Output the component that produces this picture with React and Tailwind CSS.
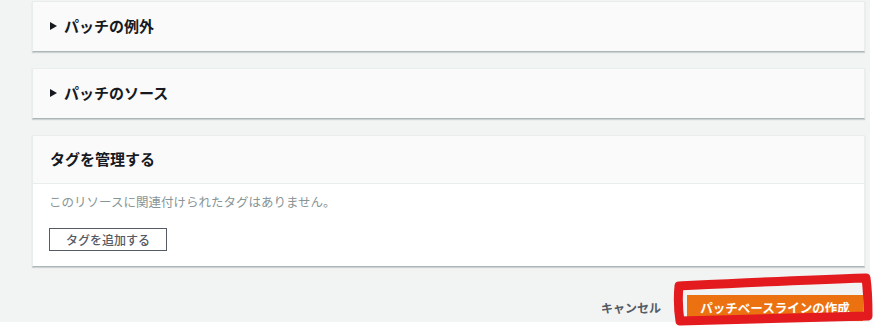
import React from 'react';

const font = { fontFamily: '"Noto Sans CJK JP", "Noto Sans", sans-serif' };

const Caret = () => (
  <svg width="7" height="8" viewBox="0 0 7 8" className="shrink-0">
    <path d="M0 0 L7 4 L0 8 Z" fill="#16191f" />
  </svg>
);

const CollapsedPanel = ({ title }) => (
  <div className="h-[51px] bg-[#fafafa] border-x border-t border-[#eaeded] border-b border-b-[#aab7b8] shadow-[0_1px_1px_0_rgba(0,28,36,0.15)] flex items-center pl-[17px] pb-[2px] gap-[7px]">
    <Caret />
    <span className="text-[15px] font-bold text-[#16191f] leading-none">{title}</span>
  </div>
);

const App = () => {
  return (
    <div className="w-[874px] h-[328px] bg-white relative overflow-hidden" style={font}>
      <div className="w-[870px] h-[322px] bg-[#f2f3f3] pl-[32px] pr-[5px] pt-px flex flex-col">
        <div className="flex flex-col gap-4">
          <CollapsedPanel title="パッチの例外" />
          <CollapsedPanel title="パッチのソース" />

          <div className="bg-white border-x border-t border-[#eaeded] border-b border-b-[#aab7b8] shadow-[0_1px_1px_0_rgba(0,28,36,0.15)]">
            <div className="h-[48px] bg-[#fafafa] border-b border-[#eaeded] flex items-center pl-[17px] pb-[2px]">
              <span className="text-[15px] font-bold text-[#16191f] leading-none">タグを管理する</span>
            </div>
            <div className="h-[82px] pl-[16px] pt-[10px]">
              <p className="text-[12.5px] leading-4 text-[#879596]">このリソースに関連付けられたタグはありません。</p>
              <button className="mt-[18px] w-[118px] h-[23px] border border-[#545b64] bg-white text-[12px] font-medium text-[#545b64] flex items-center justify-center leading-none">
                タグを追加する
              </button>
            </div>
          </div>
        </div>

        <div className="mt-[28px] flex justify-end items-center gap-[26px] pr-[2px]">
          <span className="text-[12px] font-bold text-[#545b64] leading-none">キャンセル</span>
          <button className="w-[176px] h-[26px] bg-[#ec7211] text-white text-[12.5px] font-bold flex items-center justify-center leading-none">
            パッチベースラインの作成
          </button>
        </div>
      </div>

      <svg className="absolute left-0 top-0 pointer-events-none" width="874" height="328" viewBox="0 0 874 328">
        <path
          d="M679 286 C 720 284, 800 280, 866 278 C 868 292, 868 304, 868 316 C 800 318, 730 320, 680 321 C 678 308, 678 296, 679 286 Z"
          fill="none"
          stroke="#e31b1f"
          strokeWidth="9"
          strokeLinejoin="round"
        />
      </svg>
    </div>
  );
};

export default App;
